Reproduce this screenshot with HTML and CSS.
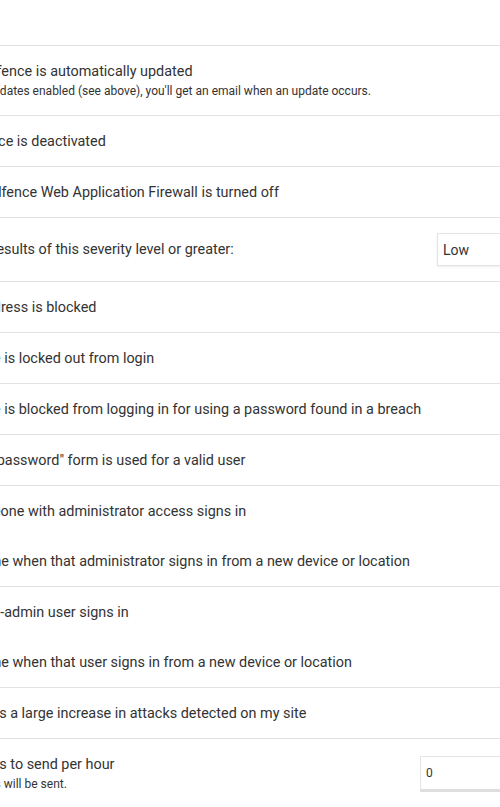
FILE: index.html
```html
<!DOCTYPE html>
<html lang="en">
<head>
<meta charset="utf-8">
<title>Email Alert Preferences</title>
<link rel="stylesheet" href="styles.css">
</head>
<body>
<div class="alerts">
  <div class="alerts-head"></div>

  <div class="opt opt-tall">
    <label class="label">
      <span class="box"></span>
      <span class="text">
        <span class="title title-update">Email me when Wordfence is automatically updated</span>
        <span class="sub">If you have automatic updates enabled (see above), you'll get an email when an update occurs.</span>
      </span>
    </label>
  </div>

  <div class="opt">
    <label class="label"><span class="box"></span><span class="title">Email me if Wordfence is deactivated</span></label>
  </div>

  <div class="opt">
    <label class="label"><span class="box"></span><span class="title">Email me if the Wordfence Web Application Firewall is turned off</span></label>
  </div>

  <div class="opt opt-select">
    <label class="label"><span class="box"></span><span class="title">Alert me with scan results of this severity level or greater:</span></label>
    <select class="select"><option>Low</option><option>Medium</option><option>Critical</option></select>
  </div>

  <div class="opt">
    <label class="label"><span class="box"></span><span class="title">Alert when an IP address is blocked</span></label>
  </div>

  <div class="opt">
    <label class="label"><span class="box"></span><span class="title">Alert when someone is locked out from login</span></label>
  </div>

  <div class="opt">
    <label class="label"><span class="box"></span><span class="title">Alert when someone is blocked from logging in for using a password found in a breach</span></label>
  </div>

  <div class="opt">
    <label class="label"><span class="box"></span><span class="title">Alert when the "lost password" form is used for a valid user</span></label>
  </div>

  <div class="opt opt-group">
    <div class="line">
      <label class="label"><span class="box"></span><span class="title">Alert me when someone with administrator access signs in</span></label>
    </div>
    <div class="line line-sub">
      <label class="label"><span class="box"></span><span class="title">Only alert me when that administrator signs in from a new device or location</span></label>
    </div>
  </div>

  <div class="opt opt-group">
    <div class="line">
      <label class="label"><span class="box"></span><span class="title">Alert me when a non-admin user signs in</span></label>
    </div>
    <div class="line line-sub">
      <label class="label"><span class="box"></span><span class="title">Only alert me when that user signs in from a new device or location</span></label>
    </div>
  </div>

  <div class="opt">
    <label class="label"><span class="box"></span><span class="title">Alert me when there's a large increase in attacks detected on my site</span></label>
  </div>

  <div class="opt opt-tall">
    <label class="label">
      <span class="box"></span>
      <span class="text">
        <span class="title title-max">Maximum email alerts to send per hour</span>
        <span class="sub">0 means unlimited alerts will be sent.</span>
      </span>
    </label>
    <input class="number" type="text" value="0">
  </div>
</div>
</body>
</html>
```
FILE: styles.css
```css
html, body {
  margin: 0;
  padding: 0;
  background: #fff;
  overflow: hidden;
}

body {
  font-family: Roboto, "Liberation Sans", sans-serif;
  color: #333;
}

.alerts {
  width: 560px;
}

.alerts-head {
  height: 45px;
  border-bottom: 1px solid #e2e2e2;
}

.opt {
  display: flex;
  align-items: center;
  min-height: 50px;
  border-bottom: 1px solid #e2e2e2;
}

.opt-tall {
  min-height: 69px;
}

.opt-select {
  min-height: 63px;
}

.opt-group {
  flex-direction: column;
  align-items: stretch;
}

.line {
  display: flex;
  align-items: center;
  height: 50px;
}

.line-sub {
  padding-left: 55.5px;
}

.label {
  display: flex;
  align-items: center;
  flex: 1;
  min-width: 0;
  white-space: nowrap;
  margin-left: -131px;
  padding-top: 1px;
}

.box {
  flex: none;
  width: 0;
}

.text {
  display: flex;
  flex-direction: column;
}

.title {
  font-size: 14.4px;
  line-height: 20px;
  color: #333;
}

.title-update {
  margin-left: -7px;
}

.title-max {
  margin-left: -5px;
}

.sub {
  font-size: 12px;
  line-height: 18px;
  color: #333;
}

.select {
  flex: none;
  -webkit-appearance: none;
  appearance: none;
  width: 123px;
  height: 33px;
  margin: 0;
  padding: 0 5px;
  border: 1px solid #e4e4e4;
  border-radius: 0;
  background: #fff;
  box-shadow: 0 1px 2px rgba(0, 0, 0, 0.08);
  font-family: Roboto, "Liberation Sans", sans-serif;
  font-size: 14px;
  color: #333;
  outline: none;
}

.number {
  flex: none;
  box-sizing: border-box;
  width: 140px;
  height: 36px;
  margin: 0;
  padding: 0 5px;
  border: 1px solid #e4e4e4;
  border-bottom: 3px solid #dedede;
  border-radius: 0;
  background: #fff;
  font-family: Roboto, "Liberation Sans", sans-serif;
  font-size: 12px;
  color: #333;
  outline: none;
}
```
